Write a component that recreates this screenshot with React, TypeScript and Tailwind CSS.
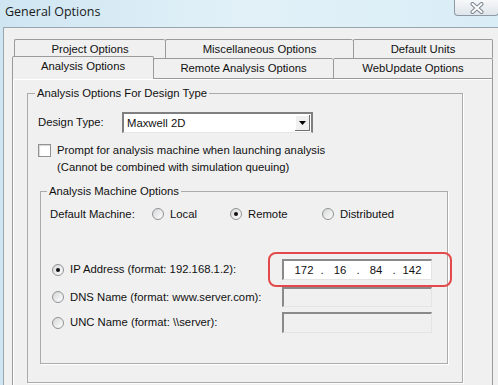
const CloseIcon = () => (
  <svg width="16" height="12" viewBox="0 0 16 12" aria-hidden="true">
    <path d="M3.5 2l9 8M12.5 2l-9 8" stroke="#7b8590" strokeWidth="4" strokeLinecap="round" />
    <path d="M3.5 2l9 8M12.5 2l-9 8" stroke="#ffffff" strokeWidth="2" strokeLinecap="round" />
  </svg>
);

const Radio = ({ checked = false }: { checked?: boolean }) => (
  <span className="flex h-[12px] w-[12px] flex-shrink-0 items-center justify-center rounded-full border border-[#8f9396] bg-gradient-to-br from-[#d6d6d6] to-[#ffffff]">
    {checked && <span className="h-[4px] w-[4px] rounded-full bg-[#111]" />}
  </span>
);

const RadioOption = ({ label, checked, className }: { label: string; checked?: boolean; className?: string }) => (
  <span className={`flex items-center gap-[6px] ${className ?? ''}`}>
    <Radio checked={checked} />
    <span>{label}</span>
  </span>
);

const BackTab = ({ label, className }: { label: string; className: string }) => (
  <div className={`flex h-full items-center justify-center rounded-t-[2px] border-t border-l border-[#9a9a9a] bg-[#f0f0f0] ${className}`}>
    {label}
  </div>
);

const Field = ({ children, disabled }: { children?: React.ReactNode; disabled?: boolean }) => (
  <div
    className={`flex h-full w-[150px] items-center border-t-2 border-l-2 border-[#8a8a8a] border-r border-b border-r-[#e4e4e4] border-b-[#e4e4e4] ${
      disabled ? 'bg-[#f0f0f0]' : 'bg-white'
    }`}
  >
    {children}
  </div>
);

export default function App() {
  return (
    <div className="flex h-[385px] w-[498px] flex-col overflow-hidden bg-gradient-to-r from-[#cfe6f2] via-[#e2f1f8] to-[#d9edf6] font-['Liberation_Sans',Arial,sans-serif] text-[11.3px] text-[#111]">
      {/* title bar */}
      <div className="flex h-[27px] flex-shrink-0 items-start justify-between">
        <span className="pl-[5px] pt-[3px] font-['Open_Sans',sans-serif] text-[12.5px] leading-[18px] text-[#1a1a1a]">
          General Options
        </span>
        <button
          type="button"
          className="mr-[-1px] flex h-[16px] w-[45px] items-center justify-center rounded-b-[4px] border border-t-0 border-[#8d9aa5] bg-gradient-to-b from-[#f6f8fa] to-[#dfe5ea]"
          aria-label="Close"
        >
          <CloseIcon />
        </button>
      </div>

      {/* dialog body */}
      <div className="ml-[3px] flex-1 border-t border-l border-[#9aa6ae] bg-[#f0f0f0] pl-[8px] pt-[11px]">
        <div className="flex w-[481px] flex-col">
          {/* back row of tabs */}
          <div className="flex h-[19px] pl-[2px]">
            <BackTab label="Project Options" className="w-[151px]" />
            <BackTab label="Miscellaneous Options" className="w-[188px]" />
            <BackTab label="Default Units" className="w-[140px] border-r" />
          </div>
          {/* front row of tabs */}
          <div className="flex h-[20px] items-end">
            <div className="relative z-10 mb-[-1px] flex h-[23px] w-[142px] items-start justify-center rounded-t-[2px] border-t border-l border-r border-[#9a9a9a] bg-[#f0f0f0] pt-px">
              Analysis Options
            </div>
            <BackTab label="Remote Analysis Options" className="ml-[-1px] w-[180px]" />
            <BackTab label="WebUpdate Options" className="w-[160px] border-r" />
          </div>

          {/* tab panel */}
          <div className="h-[320px] border border-b-0 border-[#9a9a9a] pl-[14px] pt-[8px] shadow-[inset_1px_1px_0_#ffffff]">
            <fieldset className="h-[296px] w-[436px] border border-[#ababab] shadow-[1px_1px_0_#ffffff]">
              <legend className="ml-[7px] px-[2px] leading-[13px]">Analysis Options For Design Type</legend>

              <div className="mt-[12px] flex h-[21px] items-center pl-[10px]">
                <span className="w-[84px]">Design Type:</span>
                <div className="flex h-[21px] w-[191px] items-stretch border-t-2 border-l-2 border-r-2 border-b border-[#7f7f7f] border-b-[#e6e6e6] bg-white">
                  <span className="flex flex-1 items-center pl-[3px]">Maxwell 2D</span>
                  <span className="m-px flex w-[15px] items-center justify-center border-r border-b border-[#6f6f6f] bg-[#f0f0f0] shadow-[inset_1px_1px_0_#ffffff]">
                    <svg width="7" height="4" viewBox="0 0 7 4" aria-hidden="true">
                      <path d="M0 0h7L3.5 4z" fill="#000" />
                    </svg>
                  </span>
                </div>
              </div>

              <div className="mt-[9px] flex items-start gap-[6px] pl-[10px] leading-[17px]">
                <span className="mt-[2px] h-[13px] w-[13px] flex-shrink-0 border border-[#8f9396] bg-white shadow-[inset_1px_1px_1px_#d6d6d6]" />
                <div>
                  <div>Prompt for analysis machine when launching analysis</div>
                  <div>(Cannot be combined with simulation queuing)</div>
                </div>
              </div>

              <fieldset className="ml-[12px] mt-[9px] h-[179px] w-[408px] border border-[#ababab] shadow-[1px_1px_0_#ffffff]">
                <legend className="ml-[6px] px-[2px] leading-[13px]">Analysis Machine Options</legend>

                <div className="mt-[9px] flex h-[14px] items-center pl-[9px]">
                  <span className="w-[102px]">Default Machine:</span>
                  <RadioOption label="Local" className="w-[78px]" />
                  <RadioOption label="Remote" checked className="w-[92px]" />
                  <RadioOption label="Distributed" />
                </div>

                <div className="mt-[38px] flex h-[21px] items-center pl-[11px]">
                  <RadioOption label="IP Address (format: 192.168.1.2):" checked className="w-[230px]" />
                  <div className="relative h-full">
                    <Field>
                      <div className="flex pl-[7px]">
                        <span className="w-[26px] text-center">172</span>
                        <span className="w-[10px] text-center">.</span>
                        <span className="w-[26px] text-center">16</span>
                        <span className="w-[10px] text-center">.</span>
                        <span className="w-[26px] text-center">84</span>
                        <span className="w-[10px] text-center">.</span>
                        <span className="w-[26px] text-center">142</span>
                      </div>
                    </Field>
                    <span className="pointer-events-none absolute top-[-7px] left-[-14px] h-[35px] w-[184px] rounded-[8px] border-2 border-[#e5484b]" />
                  </div>
                </div>

                <div className="mt-[7px] flex h-[20px] items-center pl-[11px]">
                  <RadioOption label="DNS Name (format: www.server.com):" className="w-[230px]" />
                  <Field disabled />
                </div>

                <div className="mt-[5px] flex h-[21px] items-center pl-[11px]">
                  <RadioOption label="UNC Name (format: \\server):" className="w-[230px]" />
                  <Field disabled />
                </div>
              </fieldset>
            </fieldset>
          </div>
        </div>
      </div>
    </div>
  );
}
